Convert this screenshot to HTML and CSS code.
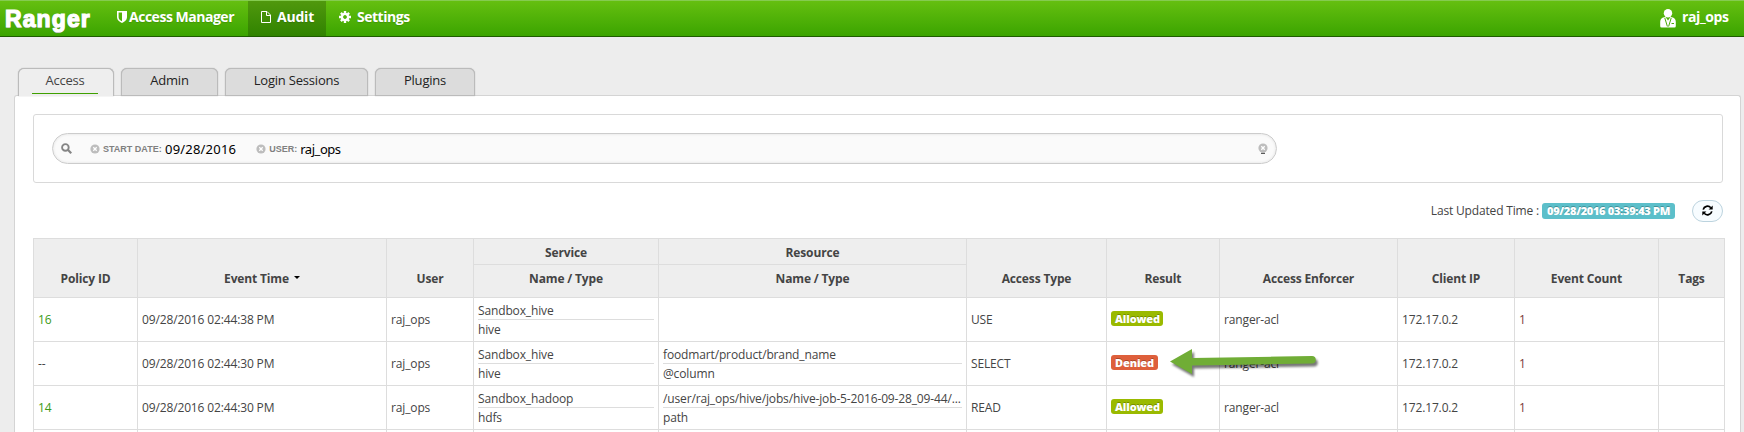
FILE: index.html
```html
<!DOCTYPE html>
<html lang="en">
<head>
<meta charset="utf-8">
<title>Ranger</title>
<link rel="stylesheet" href="styles.css">
</head>
<body>
<svg class="defs" width="0" height="0">
  <symbol id="remove" viewBox="0 0 10 10"><circle cx="5" cy="5" r="4.6" fill="#bdbdbd"/><path d="M3.3 3.3l3.4 3.4M6.7 3.3L3.3 6.7" stroke="#fff" stroke-width="1.3"/></symbol>
</svg>
<header class="navbar">
  <div class="brand">Ranger</div>
  <nav class="menu">
    <a class="item access"><svg class="shield" viewBox="0 0 10 12" width="10" height="12"><path fill="#fff" fill-rule="evenodd" d="M0 0H10V6.2C10 9 7.500 11 5 12C2.500 11 0 9 0 6.200ZM5 1.600H1.600V6.200C1.600 8 3.200 9.400 5 10.300Z"/></svg><span>Access Manager</span></a>
    <a class="item audit"><svg viewBox="0 0 10 12" width="10" height="12"><path fill="none" stroke="#fff" d="M.5.5H6L9.500 4V11.500H.5ZM5.500.5V4.500H9.500"/></svg><span>Audit</span></a>
    <a class="item settings"><svg viewBox="-6 -6 12 12" width="12" height="12"><circle r="3.100" fill="none" stroke="#fff" stroke-width="2.400"/><g stroke="#fff" stroke-width="2.400"><path d="M0-6V-3.500M0 6V3.500M-6 0H-3.500M6 0H3.500M-4.100-4.100L-2.700-2.700M4.100 4.100L2.700 2.700M-4.100 4.100L-2.700 2.700M4.100-4.100L2.700-2.700"/></g></svg><span>Settings</span></a>
  </nav>
  <div class="user"><svg viewBox="0 0 16 19" width="16" height="19"><circle cx="8" cy="4.300" r="4.200" fill="#fff"/><path fill="#fff" d="M3 8.500L5.500 8L8 11.500L10.500 8L13 8.500Q15.800 9.500 15.800 13V17Q15.800 18.500 14.500 18.500H1.500Q.2 18.500.2 17V13Q.2 9.500 3 8.500Z"/><path fill="none" stroke="#48ab06" d="M4.800 9L7.400 17.500M11.200 9L8.600 17.500M11.500 14.500H14"/></svg><span>raj_ops</span></div>
</header>
<main class="content">
  <div class="tabs">
    <a class="tab active"><span>Access</span></a>
    <a class="tab admin"><span>Admin</span></a>
    <a class="tab login"><span>Login Sessions</span></a>
    <a class="tab plugins"><span>Plugins</span></a>
  </div>
  <section class="panel">
    <div class="filter">
      <div class="search">
        <svg class="lens" viewBox="0 0 10 10" width="11" height="11"><circle cx="4" cy="4" r="3" fill="none" stroke="#858585" stroke-width="1.700"/><path d="M6.200 6.200L9.300 9.300" stroke="#858585" stroke-width="2"/></svg>
        <div class="facet date"><svg width="10" height="10"><use href="#remove"/></svg><b>START DATE:</b><span>09/28/2016</span></div>
        <div class="facet owner"><svg width="10" height="10"><use href="#remove"/></svg><b>USER:</b><span>raj_ops</span></div>
        <div class="clear"><svg width="10" height="11"><use href="#remove" width="10" height="10"/><path d="M3 10.300H7" stroke="#333"/></svg></div>
      </div>
    </div>
    <div class="updated">
      <span class="caption">Last Updated Time :</span>
      <span class="label info">09/28/2016 03:39:43 PM</span>
      <button class="refresh" aria-label="Refresh"><svg viewBox="0 0 11 11" width="11" height="11"><path fill="none" stroke="#000" stroke-width="1.700" d="M1.200 4.600A4.400 4.400 0 0 1 8.800 2.700M9.800 6.400A4.400 4.400 0 0 1 2.200 8.300"/><path d="M10.700.4V4.500H6.600ZM.3 10.600V6.500H4.400Z"/></svg></button>
    </div>
    <table class="grid">
      <colgroup><col class="c1"><col class="c2"><col class="c3"><col class="c4"><col class="c5"><col class="c6"><col class="c7"><col class="c8"><col class="c9"><col class="c10"><col class="c11"></colgroup>
      <thead>
        <tr class="top"><th class="tall"></th><th class="tall"></th><th class="tall"></th><th>Service</th><th>Resource</th><th class="tall"></th><th class="tall"></th><th class="tall"></th><th class="tall"></th><th class="tall"></th><th class="tall"></th></tr>
        <tr class="names"><th>Policy ID</th><th>Event Time<i class="caret"></i></th><th>User</th><th>Name / Type</th><th>Name / Type</th><th>Access Type</th><th>Result</th><th>Access Enforcer</th><th>Client IP</th><th>Event Count</th><th>Tags</th></tr>
      </thead>
      <tbody>
        <tr><td class="id">16</td><td>09/28/2016 02:44:38 PM</td><td>raj_ops</td><td><div class="pair"><p>Sandbox_hive</p><p>hive</p></div></td><td></td><td>USE</td><td><span class="label ok">Allowed</span></td><td>ranger-acl</td><td>172.17.0.2</td><td class="count">1</td><td></td></tr>
        <tr><td>--</td><td>09/28/2016 02:44:30 PM</td><td>raj_ops</td><td><div class="pair"><p>Sandbox_hive</p><p>hive</p></div></td><td><div class="pair"><p>foodmart/product/brand_name</p><p>@column</p></div></td><td>SELECT</td><td><span class="label no">Denied</span></td><td>ranger-acl</td><td>172.17.0.2</td><td class="count">1</td><td></td></tr>
        <tr><td class="id">14</td><td>09/28/2016 02:44:30 PM</td><td>raj_ops</td><td><div class="pair"><p>Sandbox_hadoop</p><p>hdfs</p></div></td><td><div class="pair"><p>/user/raj_ops/hive/jobs/hive-job-5-2016-09-28_09-44/...</p><p>path</p></div></td><td>READ</td><td><span class="label ok">Allowed</span></td><td>ranger-acl</td><td>172.17.0.2</td><td class="count">1</td><td></td></tr>
        <tr class="next"><td></td><td></td><td></td><td></td><td></td><td></td><td></td><td></td><td></td><td></td><td></td></tr>
      </tbody>
    </table>
  </section>
</main>
<svg class="arrow" width="154" height="34" viewBox="0 0 154 34"><path fill="#70ad36" d="M2 13.500L24 1V10L144 8A3.500 3.500 0 0 1 144 15.500L24 17.500V26Z"/></svg>
</body>
</html>
```
FILE: styles.css
```css
* { box-sizing: border-box; }
body { margin: 0; height: 432px; overflow: hidden; background: #ededed; color: #444; font: 12px/18px "Open Sans", sans-serif; position: relative; }
p { margin: 0; }
.defs { position: absolute; }
.navbar { height: 37px; display: flex; background: linear-gradient(#65bf10, #3ba400); border-top: 1px solid #85cb50; border-bottom: 1px solid #1e5c00; color: #fff; font-weight: 700; font-size: 14px; }
.brand { width: 107px; padding: 6px 0 0 5px; font: 900 23px/24px "Liberation Sans", sans-serif; letter-spacing: 1.1px; -webkit-text-stroke: 1.2px #fff; text-shadow: 0 1px 1px #888; }
.menu { display: flex; letter-spacing: -.48px; }
.item { display: flex; align-items: center; height: 35px; padding-bottom: 3px; }
.item span { white-space: nowrap; text-shadow: 0 1px 1px #0002; }
.access { width: 141px; padding-left: 10px; gap: 2px; }
.audit { width: 78px; padding-left: 13px; gap: 6px; letter-spacing: -.2px; background: linear-gradient(#50980d, #308300); }
.settings { padding-left: 13px; gap: 6px; }
.user { margin-left: auto; width: 84px; display: flex; gap: 6px; height: 35px; align-items: center; letter-spacing: -.4px; }
.user span { padding-bottom: 3px; }
.content { padding: 31px 3px 0 14px; }
.tabs { display: flex; gap: 7px; padding-left: 4px; height: 27px; font-size: 13px; letter-spacing: -.2px; color: #222; }
.tab { height: 28px; border: 1px solid #bbb; border-radius: 6px 6px 0 0; background: #dcdcdc; box-shadow: 0 0 1px #999; text-align: center; padding-top: 2px; width: 97px; }
.tab.active { width: 96px; background: #eee; border-bottom: 0; color: #444; padding: 2px 15px 0 13px; }
.tab.active span { display: block; height: 23px; border-bottom: 1px solid #3fa000; }
.tab.login { width: 143px; }
.tab.plugins { width: 100px; }
.panel { height: 337px; overflow: hidden; border: 1px solid #d4d4d4; border-bottom: 0; border-radius: 3px 3px 0 0; background: #fff; padding: 18px 15px 0 18px; }
.filter { height: 69px; width: 1690px; border: 1px solid #d9d9d9; border-radius: 3px; padding: 18px; }
.search { width: 1225px; height: 31px; border: 1px solid #ccc; border-radius: 16px; background: #fafafa; box-shadow: inset 0 0 3px #ddd; display: flex; align-items: center; padding-left: 8px; color: #000; }
.facet { display: flex; align-items: center; margin-left: 18px; font-size: 13px; }
.facet b { width: 59px; margin: 0 3px 0 3px; font: 700 9px/18px "Liberation Sans", sans-serif; color: #808080; white-space: nowrap; }
.facet span { font-family: "Noto Sans", sans-serif; letter-spacing: .2px; }
.owner { margin-left: 20px; }
.owner b { width: 28px; }
.owner span { letter-spacing: -.45px; }
.clear { margin-left: auto; margin-right: 8px; }
.clear svg, .facet svg, .lens { display: block; }
.updated { height: 55px; display: flex; align-items: center; justify-content: flex-end; padding-right: 2px; }
.caption { margin-right: 3px; white-space: nowrap; letter-spacing: -.17px; }
.label { display: inline-block; border-radius: 3px; color: #fff; font-weight: 800; font-size: 11px; line-height: 15px; padding: 0 4px; white-space: nowrap; text-shadow: 0 -1px 0 #0004; }
.info { background: #5cbfca; width: 133px; letter-spacing: -.3px; line-height: 16px; text-align: center; }
.ok { background: #9aba00; width: 52px; }
.no { background: #de5f3b; width: 47px; }
.grid .label { margin-bottom: 2px; vertical-align: middle; letter-spacing: -.15px; text-align: center; position: relative; top: -1px; }
.refresh { width: 31px; height: 22px; border: 1px solid #bcd3de; border-radius: 11px; background: #f7fcff; margin-left: 17px; padding: 0; display: flex; align-items: center; justify-content: center; }
.grid { border-collapse: collapse; table-layout: fixed; width: 1692px; letter-spacing: -.14px; }
.c1 { width: 104px; } .c2 { width: 249px; } .c3 { width: 87px; } .c4 { width: 185px; } .c5 { width: 308px; } .c6 { width: 140px; } .c7 { width: 113px; } .c8 { width: 178px; } .c9 { width: 117px; } .c10 { width: 144px; } .c11 { width: 66px; }
.grid th, .grid td { border: 1px solid #ddd; padding: 0 4px; white-space: nowrap; }
.grid th { background: #eee; font-weight: 700; letter-spacing: -.15px; }
.top th { height: 26px; padding-top: 2px; }
.names th { height: 33px; padding-bottom: 4px; }
.top .tall { border-bottom: 0; }
.names th:not(:nth-child(4)):not(:nth-child(5)) { border-top: 0; }
.grid td { height: 44px; }
.grid .next td { height: 3px; border-bottom: 0; }
.grid .id { color: #3a9b18; }
.grid .count { color: #7c3a3a; }
.caret { display: inline-block; margin-left: 5px; vertical-align: 4px; border: 3px solid transparent; border-top-color: #000; border-bottom: 0; }
.pair { padding-top: 1px; }
.pair p { height: 19px; line-height: 20px; }
.pair p:first-child { border-bottom: 1px solid #ddd; }
.arrow { position: absolute; left: 1168px; top: 348px; filter: drop-shadow(2px 3px 1px #0008); }
```
